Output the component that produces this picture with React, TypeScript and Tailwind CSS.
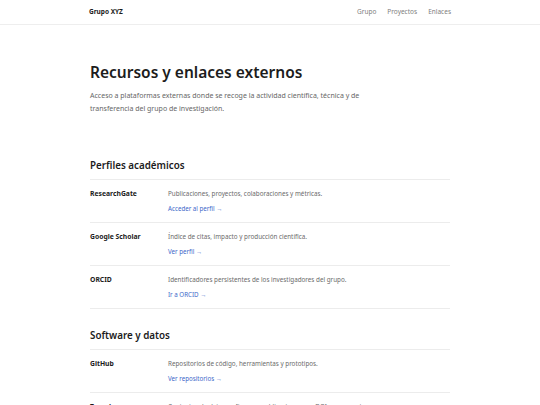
const profiles = [
  {
    name: "ResearchGate",
    description: "Publicaciones, proyectos, colaboraciones y métricas.",
    link: "Acceder al perfil",
  },
  {
    name: "Google Scholar",
    description: "Índice de citas, impacto y producción científica.",
    link: "Ver perfil",
  },
  {
    name: "ORCID",
    description: "Identificadores persistentes de los investigadores del grupo.",
    link: "Ir a ORCID",
  },
];

const software = [
  {
    name: "GitHub",
    description: "Repositorios de código, herramientas y prototipos.",
    link: "Ver repositorios",
  },
  {
    name: "Zenodo",
    description: "Conjuntos de datos, software y publicaciones con DOI permanente.",
    link: "Ver comunidad",
  },
];

type Resource = { name: string; description: string; link: string };

function Section({ title, items }: { title: string; items: Resource[] }) {
  return (
    <section>
      <h2 className="mb-[6px] text-[9.8px] font-semibold leading-[14px] text-[#1c1c1c]">{title}</h2>
      <div className="border-t border-[#ececec]">
        {items.map((item) => (
          <div key={item.name} className="flex border-b border-[#ececec] pt-[9px] pb-[8px]">
            <p className="w-[78px] shrink-0 text-[6.8px] font-bold leading-[10px] text-[#1c1c1c]">
              {item.name}
            </p>
            <div>
              <p className="text-[6.3px] leading-[10px] text-[#6b6b6b]">{item.description}</p>
              <a href="#" className="mt-[5px] block text-[6.2px] leading-[10px] text-[#3d68c9]">
                {item.link} →
              </a>
            </div>
          </div>
        ))}
      </div>
    </section>
  );
}

export default function App() {
  return (
    <div className="min-h-screen bg-white font-['Noto_Sans',sans-serif] text-[#1c1c1c]">
      <header className="border-b border-[#eeeeee]">
        <div className="mx-auto flex h-[24px] w-[362px] items-center justify-between">
          <span className="text-[6.5px] font-bold">Grupo XYZ</span>
          <nav className="flex gap-[11px] text-[6.5px] text-[#808080]">
            <a href="#">Grupo</a>
            <a href="#">Proyectos</a>
            <a href="#">Enlaces</a>
          </nav>
        </div>
      </header>

      <main className="mx-auto w-[360px] pt-[37px]">
        <h1 className="text-[15.5px] font-semibold leading-[20px] text-[#1c1c1c]">
          Recursos y enlaces externos
        </h1>
        <p className="mt-[7px] w-[290px] text-[7px] leading-[13px] text-[#666666]">
          Acceso a plataformas externas donde se recoge la actividad científica, técnica y de
          transferencia del grupo de investigación.
        </p>

        <div className="mt-[44px] flex flex-col gap-[20px]">
          <Section title="Perfiles académicos" items={profiles} />
          <Section title="Software y datos" items={software} />
        </div>
      </main>
    </div>
  );
}
